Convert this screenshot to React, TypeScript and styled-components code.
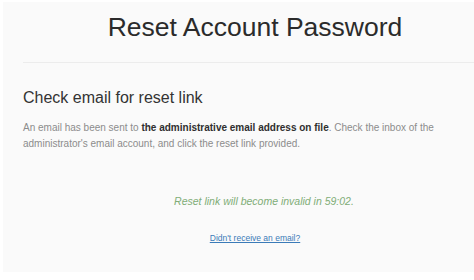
import React from "react";
import styled, { createGlobalStyle } from "styled-components";

const Global = createGlobalStyle`
  html, body {
    margin: 0;
    padding: 0;
    background: #ffffff;
    overflow: hidden;
  }
  body {
    font-family: "Liberation Sans", Arial, Helvetica, sans-serif;
  }
`;

const Panel = styled.div`
  box-sizing: border-box;
  margin: 2px 0 0 3px;
  width: 471px;
  height: 270px;
  padding: 10px 0 0 20px;
  background: #fafafa;
  overflow: hidden;
`;

const Content = styled.div`
  width: 464px;
  display: flex;
  flex-direction: column;
`;

const Title = styled.h1`
  margin: 0;
  font-size: 26.5px;
  line-height: 30px;
  font-weight: 400;
  color: #2b2b2b;
  text-align: center;
`;

const Rule = styled.hr`
  margin: 20px 0 0 0;
  border: 0;
  border-top: 1px solid #ececec;
  height: 0;
`;

const Heading = styled.h3`
  margin: 25px 0 0 0;
  font-size: 16px;
  line-height: 20px;
  font-weight: 400;
  color: #333333;
`;

const Body = styled.p`
  margin: 12px 0 0 0;
  font-size: 10px;
  line-height: 16px;
  color: #8c8c8c;

  strong {
    color: #2f2f2f;
    font-weight: 700;
  }
`;

const Countdown = styled.p`
  margin: 41px 0 0 0;
  padding-left: 18px;
  font-size: 10.5px;
  line-height: 16px;
  font-style: italic;
  color: #80ad77;
  text-align: center;
`;

const LinkRow = styled.div`
  margin-top: 23px;
  text-align: center;
  font-size: 8.5px;
  line-height: 12px;
`;

const Link = styled.a`
  color: #3b7bb8;
  text-decoration: underline;
  cursor: pointer;
`;

export default function App() {
  return (
    <>
      <Global />
      <Panel>
        <Content>
          <Title>Reset Account Password</Title>
          <Rule />
          <Heading>Check email for reset link</Heading>
          <Body>
            An email has been sent to{" "}
            <strong>the administrative email address on file</strong>. Check
            the inbox of the administrator's email account, and click the reset
            link provided.
          </Body>
          <Countdown>Reset link will become invalid in 59:02.</Countdown>
          <LinkRow>
            <Link href="#">Didn't receive an email?</Link>
          </LinkRow>
        </Content>
      </Panel>
    </>
  );
}
